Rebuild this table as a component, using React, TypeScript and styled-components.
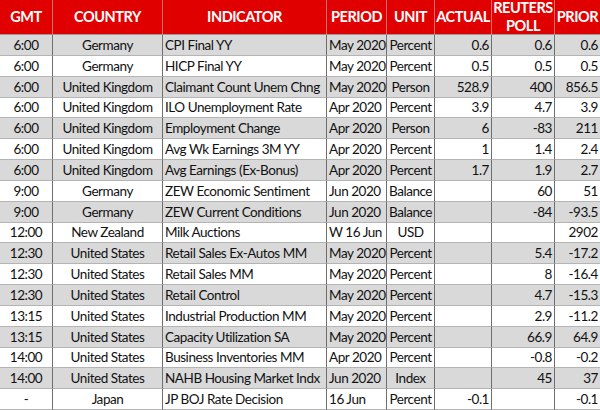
import React from "react"
import styled, { createGlobalStyle } from "styled-components"

const GlobalStyle = createGlobalStyle`
  html, body {
    margin: 0;
    padding: 0;
    background: #ffffff;
  }
`

type Align = "left" | "center" | "right"

const columns: { title: string; align: Align }[] = [
  { title: "GMT", align: "center" },
  { title: "COUNTRY", align: "center" },
  { title: "INDICATOR", align: "left" },
  { title: "PERIOD", align: "left" },
  { title: "UNIT", align: "center" },
  { title: "ACTUAL", align: "right" },
  { title: "REUTERS POLL", align: "right" },
  { title: "PRIOR", align: "right" },
]

const rows: string[][] = [
  ["6:00", "Germany", "CPI Final YY", "May 2020", "Percent", "0.6", "0.6", "0.6"],
  ["6:00", "Germany", "HICP Final YY", "May 2020", "Percent", "0.5", "0.5", "0.5"],
  ["6:00", "United Kingdom", "Claimant Count Unem Chng", "May 2020", "Person", "528.9", "400", "856.5"],
  ["6:00", "United Kingdom", "ILO Unemployment Rate", "Apr 2020", "Percent", "3.9", "4.7", "3.9"],
  ["6:00", "United Kingdom", "Employment Change", "Apr 2020", "Person", "6", "-83", "211"],
  ["6:00", "United Kingdom", "Avg Wk Earnings 3M YY", "Apr 2020", "Percent", "1", "1.4", "2.4"],
  ["6:00", "United Kingdom", "Avg Earnings (Ex-Bonus)", "Apr 2020", "Percent", "1.7", "1.9", "2.7"],
  ["9:00", "Germany", "ZEW Economic Sentiment", "Jun 2020", "Balance", "", "60", "51"],
  ["9:00", "Germany", "ZEW Current Conditions", "Jun 2020", "Balance", "", "-84", "-93.5"],
  ["12:00", "New Zealand", "Milk Auctions", "W 16 Jun", "USD", "", "", "2902"],
  ["12:30", "United States", "Retail Sales Ex-Autos MM", "May 2020", "Percent", "", "5.4", "-17.2"],
  ["12:30", "United States", "Retail Sales MM", "May 2020", "Percent", "", "8", "-16.4"],
  ["12:30", "United States", "Retail Control", "May 2020", "Percent", "", "4.7", "-15.3"],
  ["13:15", "United States", "Industrial Production MM", "May 2020", "Percent", "", "2.9", "-11.2"],
  ["13:15", "United States", "Capacity Utilization SA", "May 2020", "Percent", "", "66.9", "64.9"],
  ["14:00", "United States", "Business Inventories MM", "Apr 2020", "Percent", "", "-0.8", "-0.2"],
  ["14:00", "United States", "NAHB Housing Market Indx", "Jun 2020", "Index", "", "45", "37"],
  ["-", "Japan", "JP BOJ Rate Decision", "16 Jun", "Percent", "-0.1", "", "-0.1"],
]

const Sheet = styled.div`
  display: grid;
  grid-template-columns: 53px 110px 164px 60px 48px 57px 63px 45px;
  grid-template-rows: 35px repeat(18, 1fr);
  width: 600px;
  height: 410px;
  font-family: Lato, "Liberation Sans", sans-serif;
  color: #111;
  overflow: hidden;
`

const HeadCell = styled.div<{ $last?: boolean }>`
  box-sizing: border-box;
  display: flex;
  align-items: center;
  justify-content: center;
  text-align: center;
  background: #e10000;
  color: #ffffff;
  font-weight: 700;
  font-size: 14.5px;
  letter-spacing: -0.45px;
  line-height: 18px;
  padding: 0;
  border-right: ${(p) => (p.$last ? "none" : "1px solid #ef6a6a")};
  border-bottom: 1px solid #9a9a9a;
`

const Cell = styled.div<{ $align: Align; $shade: boolean; $last?: boolean }>`
  box-sizing: border-box;
  display: flex;
  align-items: center;
  justify-content: ${(p) =>
    p.$align === "left" ? "flex-start" : p.$align === "right" ? "flex-end" : "center"};
  padding: 0 2px 0 2px;
  background: ${(p) => (p.$shade ? "#d9d9d9" : "#ffffff")};
  font-size: 13.5px;
  letter-spacing: -0.45px;
  white-space: nowrap;
  overflow: hidden;
  border-right: ${(p) => (p.$last ? "none" : "1px solid #6f6f6f")};
  border-bottom: 1px solid #b4b4b4;
`

export default function App() {
  return (
    <>
      <GlobalStyle />
      <Sheet>
        {columns.map((c, i) => (
          <HeadCell key={c.title} $last={i === columns.length - 1}>
            {c.title}
          </HeadCell>
        ))}
        {rows.map((r, ri) =>
          r.map((v, ci) => (
            <Cell
              key={ri + "-" + ci}
              $align={columns[ci].align}
              $shade={ri % 2 === 0}
              $last={ci === columns.length - 1}
            >
              {v}
            </Cell>
          ))
        )}
      </Sheet>
    </>
  )
}
